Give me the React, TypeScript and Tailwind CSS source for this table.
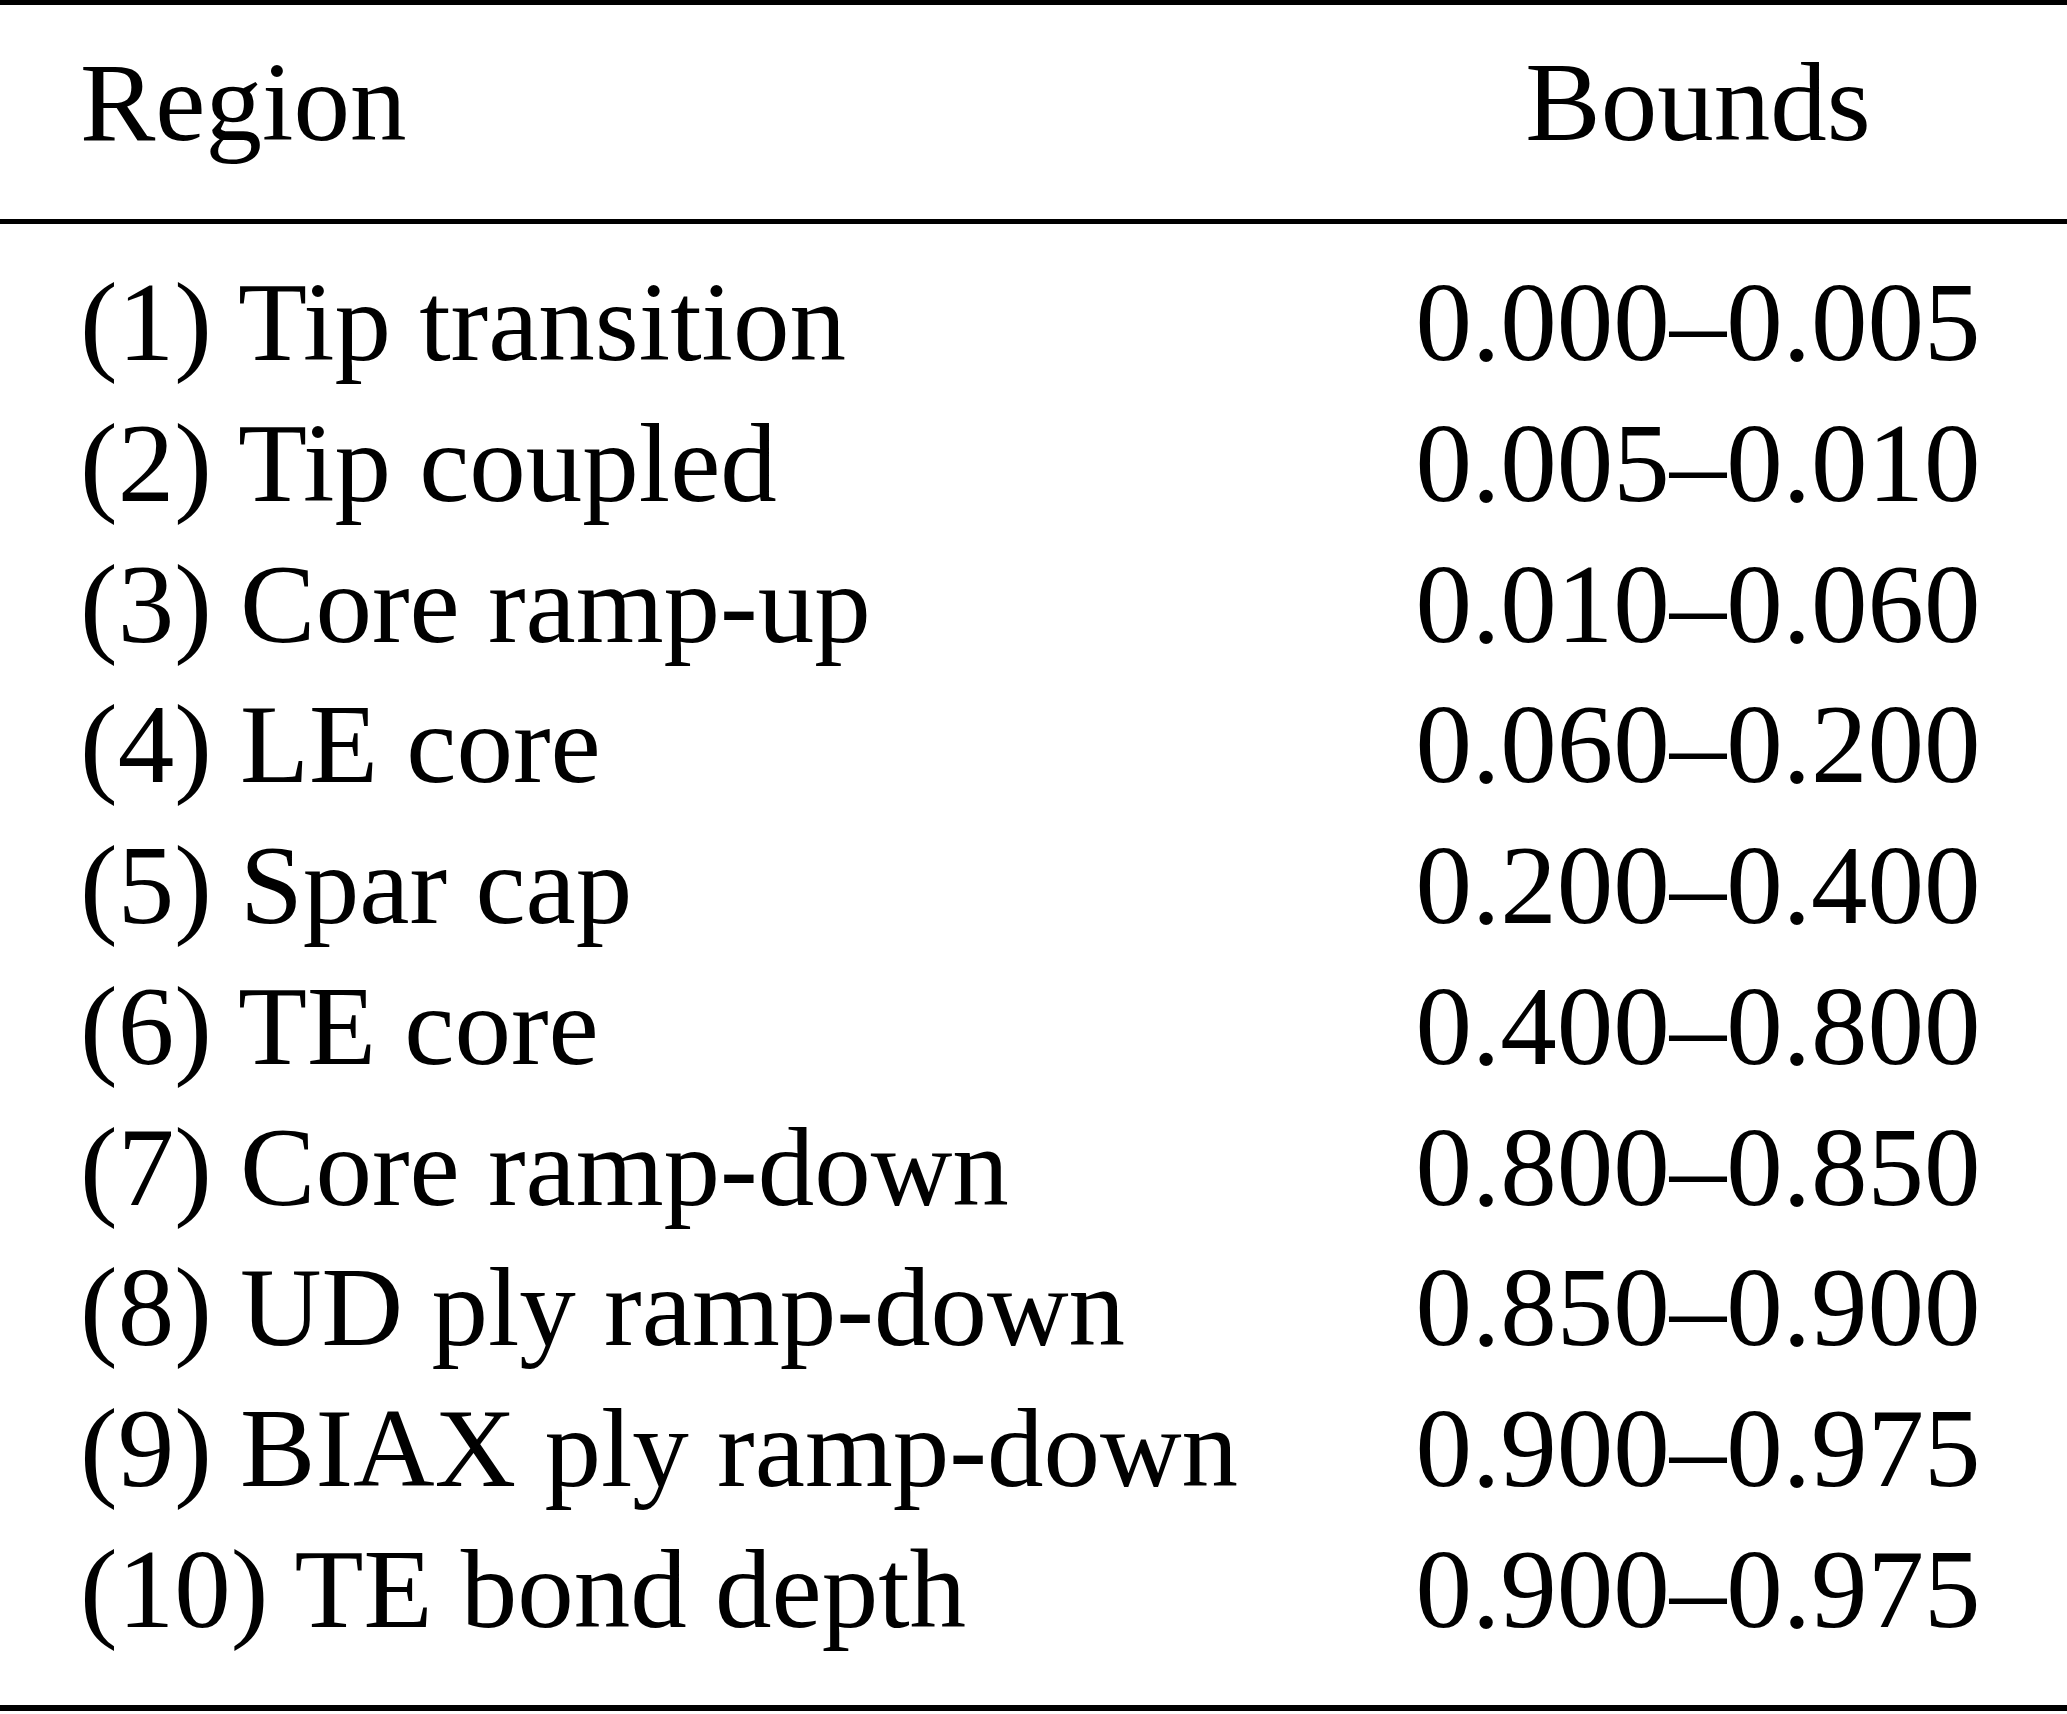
const rows: [string, string][] = [
  ["(1) Tip transition", "0.000–0.005"],
  ["(2) Tip coupled", "0.005–0.010"],
  ["(3) Core ramp-up", "0.010–0.060"],
  ["(4) LE core", "0.060–0.200"],
  ["(5) Spar cap", "0.200–0.400"],
  ["(6) TE core", "0.400–0.800"],
  ["(7) Core ramp-down", "0.800–0.850"],
  ["(8) UD ply ramp-down", "0.850–0.900"],
  ["(9) BIAX ply ramp-down", "0.900–0.975"],
  ["(10) TE bond depth", "0.900–0.975"],
];

export default function App() {
  return (
    <div className="w-[2067px] h-[1714px] bg-white text-black font-['Liberation_Serif','Times_New_Roman',serif] text-[113px] leading-[141px]">
      <div className="h-[5px] bg-black" />
      {/* Header */}
      <div className="grid grid-cols-[1fr_738px] pt-[26px] pb-[47px]">
        <div className="pl-[80px]">Region</div>
        <div className="text-center">Bounds</div>
      </div>
      <div className="h-[5px] bg-black" />
      {/* Body */}
      <div className="flex flex-col pt-[27px] pb-[46px]">
        {rows.map(([region, bounds]) => (
          <div key={region} className="grid grid-cols-[1fr_738px] h-[140.75px]">
            <div className="pl-[80px] whitespace-nowrap">{region}</div>
            <div className="text-center whitespace-nowrap">{bounds}</div>
          </div>
        ))}
      </div>
      <div className="h-[6px] bg-black" />
    </div>
  );
}
